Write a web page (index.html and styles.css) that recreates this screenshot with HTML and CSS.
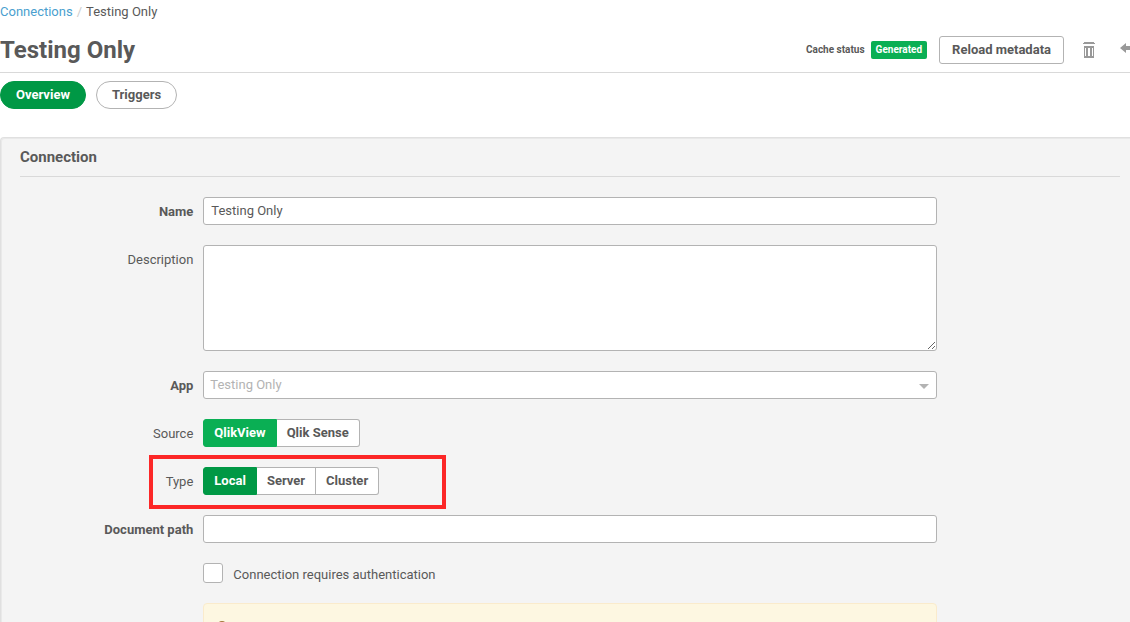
FILE: index.html
```html
<!DOCTYPE html>
<html lang="en">
<head>
  <meta charset="UTF-8" />
  <meta name="viewport" content="width=device-width, initial-scale=1.0" />
  <title>Testing Only</title>
  <link rel="stylesheet" href="styles.css">
</head>
<body>
  <nav class="breadcrumb">
    <a href="#">Connections</a>
    <span class="divider">/</span>
    <span>Testing Only</span>
  </nav>

  <header class="page-header">
    <h1>Testing Only</h1>
    <div class="actions">
      <span class="cache-label">Cache status</span>
      <span class="badge">Generated</span>
      <button type="button" class="btn">Reload metadata</button>
      <button type="button" class="icon-btn" aria-label="Delete">
        <svg width="12" height="16" viewBox="0 0 12 16" fill="#999">
          <path d="M1 0h10v1H1zM0 1h12v1H0zM1 4h10v12H1zM2 6v8h1V6zM5 6v8h2V6zM9 6v8h1V6z" fill-rule="evenodd" />
        </svg>
      </button>
      <button type="button" class="icon-btn back" aria-label="Back">
        <svg width="16" height="16" viewBox="0 0 16 16" fill="#999">
          <path d="M0 6L6 1v3h3c4 0 6 2.500 6 8-1.500-3-3-4-6-4H6v3z" />
        </svg>
      </button>
    </div>
  </header>

  <div class="tabs">
    <button type="button" class="tab active">Overview</button>
    <button type="button" class="tab">Triggers</button>
  </div>

  <section class="panel">
    <h2>Connection</h2>
    <form>
      <div class="form-row">
        <label for="name" class="required">Name</label>
        <input type="text" id="name" class="control" value="Testing Only" />
      </div>
      <div class="form-row">
        <label for="description">Description</label>
        <textarea id="description" class="control"></textarea>
      </div>
      <div class="form-row">
        <label for="app" class="required">App</label>
        <div class="select-wrap">
          <select id="app" class="control" disabled>
            <option>Testing Only</option>
          </select>
        </div>
      </div>
      <div class="form-row" role="group" aria-labelledby="source-label">
        <span class="label" id="source-label">Source</span>
        <div class="btn-group">
          <button type="button" class="selected">QlikView</button>
          <button type="button">Qlik Sense</button>
        </div>
      </div>
      <div class="form-row highlight" role="group" aria-labelledby="type-label">
        <span class="label" id="type-label">Type</span>
        <div class="btn-group">
          <button type="button" class="selected dark">Local</button>
          <button type="button">Server</button>
          <button type="button">Cluster</button>
        </div>
      </div>
      <div class="form-row">
        <label for="path" class="required">Document path</label>
        <input type="text" id="path" class="control" />
      </div>
      <div class="form-row">
        <div class="check">
          <input type="checkbox" id="auth" />
          <label for="auth">Connection requires authentication</label>
        </div>
      </div>
      <div class="form-row">
        <div class="alert">
          <svg width="12" height="14" viewBox="0 0 12 14" fill="none" stroke="#a5783c" stroke-width="2">
            <path d="M3 6V4a3 3 0 0 1 6 0v2M1 7h10v6H1z" />
          </svg>
        </div>
      </div>
    </form>
  </section>
</body>
</html>
```
FILE: styles.css
```css
*,
*::before,
*::after {
  box-sizing: border-box;
}

body {
  margin: 0;
  height: 100vh;
  overflow: hidden;
  background: #fff;
  color: #595959;
  font-family: Roboto, "Liberation Sans", sans-serif;
  font-size: 13px;
  line-height: 20px;
}

button,
input,
select,
textarea {
  font: inherit;
  color: inherit;
}

button {
  cursor: pointer;
  white-space: nowrap;
}

.breadcrumb {
  display: flex;
  gap: 4px;
  padding-top: 2px;
}

.breadcrumb a {
  color: #4a9fcf;
  text-decoration: none;
}

.breadcrumb .divider {
  color: #ccc;
}

.page-header {
  display: flex;
  justify-content: space-between;
  align-items: center;
  height: 51px;
  padding-top: 5px;
  border-bottom: 1px solid #d9d9d9;
}

h1 {
  margin: 0;
  font-size: 24px;
  line-height: 32px;
  font-weight: bold;
}

.actions {
  display: flex;
  align-items: center;
  margin-right: -6px;
}

.cache-label {
  font-size: 10px;
  font-weight: bold;
}

.badge {
  margin: 0 12px 0 6px;
  padding: 0 5px;
  border-radius: 2px;
  background: #0aaf54;
  color: #fff;
  font-size: 10px;
  line-height: 18px;
  font-weight: bold;
}

.btn {
  height: 28px;
  padding: 0 12px;
  border: 1px solid #b3b3b3;
  border-radius: 3px;
  background: #fff;
  font-weight: bold;
}

.icon-btn {
  display: flex;
  margin-left: 19px;
  padding: 0;
  border: 0;
  background: none;
}

.icon-btn.back {
  margin-left: 25px;
}

.tabs {
  display: flex;
  gap: 10px;
  padding: 8px 0 28px;
}

.tab {
  height: 28px;
  padding: 0 15px;
  border: 1px solid #b3b3b3;
  border-radius: 14px;
  background: #fff;
  font-weight: bold;
}

.tab.active {
  border-color: #009845;
  background: #009845;
  color: #fff;
}

.panel {
  padding: 9px 10px 20px 19px;
  border: 1px solid #e0e0e0;
  border-width: 1px 0 1px 1px;
  border-radius: 4px 0 0 4px;
  background: #f4f4f4;
  box-shadow: inset 1px 1px 0 #e9e9e9;
}

h2 {
  margin: 0 0 20px;
  padding-bottom: 9px;
  border-bottom: 1px solid #d9d9d9;
  font-size: 15px;
  line-height: 20px;
  font-weight: bold;
}

form {
  display: flex;
  flex-direction: column;
  gap: 20px;
}

.form-row {
  display: grid;
  grid-template-columns: 2fr 8fr 2fr;
}

.form-row > label,
.form-row > .label {
  padding: 5px 10px 0 0;
  text-align: right;
}

.form-row > .required {
  font-weight: bold;
}

.control {
  display: block;
  width: 100%;
  height: 28px;
  padding: 0 7px 2px;
  border: 1px solid #b3b3b3;
  border-radius: 3px;
  background: #fff;
}

textarea.control {
  height: 106px;
  padding: 4px 7px;
  resize: vertical;
}

.select-wrap {
  position: relative;
}

.select-wrap select {
  appearance: none;
  padding: 0 6px;
  color: #b3b3b3;
  opacity: 1;
}

.select-wrap::after {
  content: "";
  position: absolute;
  top: 13px;
  right: 8px;
  border: 5px solid transparent;
  border-top-color: #b3b3b3;
  border-bottom: 0;
}

.btn-group {
  display: flex;
}

.btn-group button {
  height: 28px;
  padding: 0 10px;
  border: 1px solid #b3b3b3;
  border-left-width: 0;
  background: #fff;
  font-weight: bold;
}

.btn-group button:first-child {
  border-left-width: 1px;
  border-radius: 3px 0 0 3px;
}

.btn-group button:last-child {
  border-radius: 0 3px 3px 0;
}

.btn-group .selected {
  border-color: #0aaf54;
  background: #0aaf54;
  color: #fff;
}

.btn-group .selected.dark {
  border-color: #009845;
  background: #009845;
}

.highlight {
  position: relative;
}

/* red marker around the type row */
.highlight::before {
  content: "";
  position: absolute;
  top: -12px;
  bottom: -14px;
  left: 129px;
  width: 297px;
  border: 4px solid #fc2727;
  pointer-events: none;
}

.check,
.alert {
  grid-column: 2;
}

.check {
  display: flex;
  gap: 10px;
  height: 20px;
}

.check label {
  padding-top: 2px;
}

.check input {
  appearance: none;
  width: 20px;
  height: 20px;
  margin: 0;
  border: 1px solid #b3b3b3;
  border-radius: 3px;
  background: #fff;
}

.alert {
  min-height: 60px;
  padding: 17px 12px;
  border: 1px solid #faebcc;
  border-radius: 4px;
  background: #fdf7e1;
}
```
